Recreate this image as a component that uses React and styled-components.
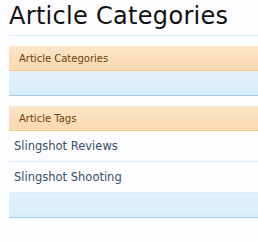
import React from "react";
import styled, { createGlobalStyle } from "styled-components";

const GlobalStyle = createGlobalStyle`
  body {
    margin: 0;
    background: #fdfdff;
    font-family: "DejaVu Sans", sans-serif;
  }
`;

const Page = styled.div`
  width: 258px;
  padding-left: 9px;
  box-sizing: border-box;
`;

const Title = styled.h1`
  margin: 0;
  height: 36px;
  padding-top: 2px;
  box-sizing: border-box;
  font-size: 24px;
  letter-spacing: 0.3px;
  font-weight: normal;
  color: #111;
  border-bottom: 1px solid #d7edfc;
  line-height: 28px;
`;

const Block = styled.div`
  margin-top: 10px;
`;

const Header = styled.div`
  height: 24px;
  padding-left: 10px;
  display: flex;
  align-items: center;
  font-size: 10px;
  color: #6d3f03;
  background: linear-gradient(to bottom, #fbe5c9, #f9d9b0);
  border-bottom: 1px solid #f0c48a;
`;

const Row = styled.a`
  display: flex;
  align-items: center;
  height: 30px;
  padding-left: 5px;
  font-size: 11.5px;
  color: #34506a;
  text-decoration: none;
  border-bottom: 1px solid #d7edfc;
`;

const Footer = styled.div`
  height: 24px;
  background: linear-gradient(to bottom, #e4f2fd, #d7edfc);
  border-bottom: 1px solid #a5cae4;
`;

const tags = ["Slingshot Reviews", "Slingshot Shooting"];

export default function App() {
  return (
    <Page>
      <GlobalStyle />
      <Title>Article Categories</Title>
      <Block>
        <Header>Article Categories</Header>
        <Footer />
      </Block>
      <Block>
        <Header>Article Tags</Header>
        {tags.map((t) => (
          <Row key={t} href="#">
            {t}
          </Row>
        ))}
        <Footer />
      </Block>
    </Page>
  );
}
